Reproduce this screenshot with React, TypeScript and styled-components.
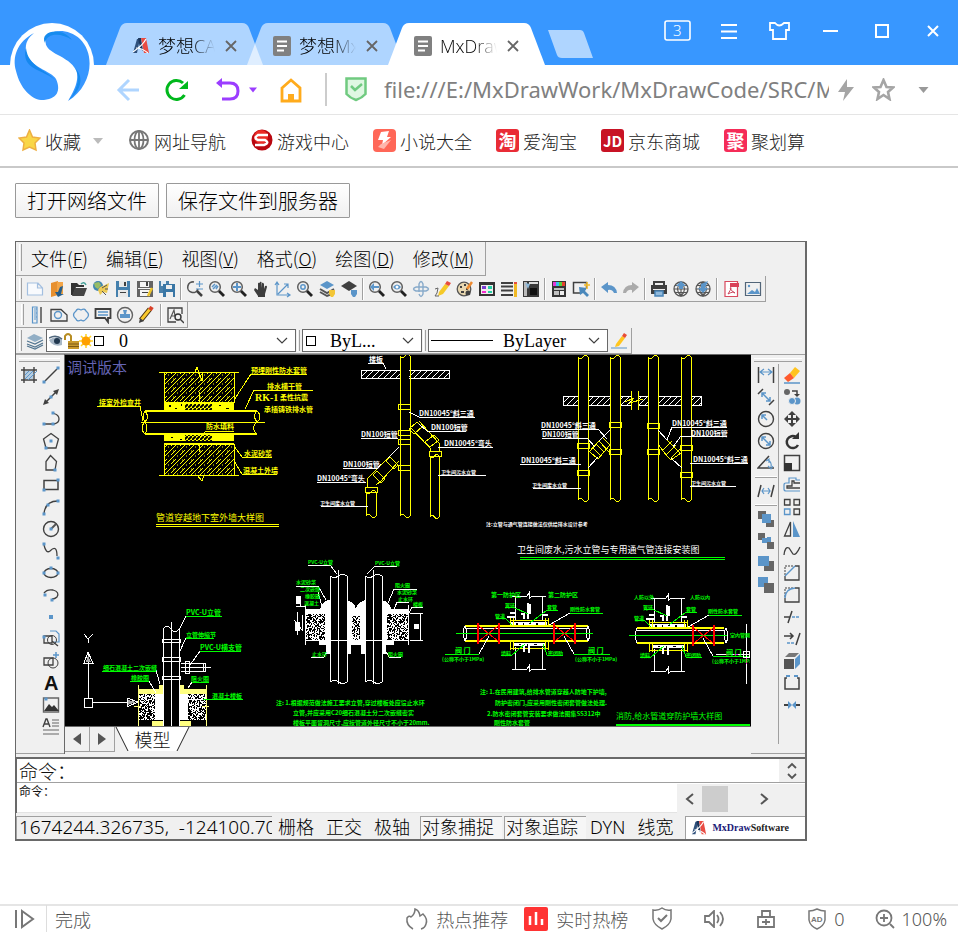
import React from "react";
import styled, { createGlobalStyle, css } from "styled-components";

const SANS = '"Noto Sans CJK SC", "Noto Sans", sans-serif';
const UI = '"Open Sans", "Noto Sans CJK SC", sans-serif';
const LATIN_FIRST = '"Noto Sans", "Noto Sans CJK SC", sans-serif';
const B = "#5b95c9";
const K = "#404040";
const GREY = "#777";

const GlobalStyle = createGlobalStyle`
  * { box-sizing: border-box; }
  html, body, #root { height: 100%; }
  body { margin: 0; background: #fff; font-family: ${SANS}; font-weight: 300; color: #111; overflow: hidden; }
  button { font: inherit; color: inherit; cursor: pointer; }
  svg { display: block; flex: none; }
`;

/* ---------- browser frame ---------- */

const Page = styled.div`
  display: flex;
  flex-direction: column;
  min-height: 100vh;
`;
const TitleBar = styled.header`
  position: relative;
  display: flex;
  align-items: flex-end;
  height: 65px;
  padding-left: 106px;
  background: #3897ff;
`;
const BrandBadge = styled.div`
  position: absolute;
  left: 10px;
  top: 23px;
  z-index: 3;
`;
const TabShape = styled.div<{ $active?: boolean }>`
  display: flex;
  align-items: center;
  width: 157px;
  height: 42px;
  margin-right: -16px;
  padding: 3px 0 0 26px;
  background: ${(p) => (p.$active ? "#fff" : "rgba(255,255,255,.6)")};
  clip-path: path("M0 42 L14 5 Q16 0 21 0 H136 Q141 0 143 5 L157 42 Z");
`;
const TabTitle = styled.span`
  width: 57px;
  margin: 0 10px 0 8px;
  overflow: hidden;
  white-space: nowrap;
  font: 300 18px/26px ${UI};
  color: #000;
  mask-image: linear-gradient(90deg, #000 60%, transparent 100%);
`;
const BareButton = styled.button`
  display: flex;
  align-items: center;
  justify-content: center;
  padding: 0;
  border: 0;
  background: none;
`;
const NewTab = styled.button`
  width: 45px;
  height: 28px;
  margin: 0 0 7px 19px;
  padding: 0;
  border: 0;
  background: #afd5ff;
  clip-path: path("M0 0 H32 Q35 0 36 3 L45 28 H14 Q10 28 9 25 Z");
`;
const WindowButtons = styled.div`
  display: flex;
  align-self: flex-start;
  gap: 24px;
  margin: 17px 12px 0 auto;
  button { width: 27px; height: 28px; }
`;
const AddressRow = styled.div`
  display: flex;
  align-items: center;
  height: 50px;
  padding: 0 28px 0 115px;
  border-bottom: 1px solid #e5e5e5;
`;
const NavGroup = styled.nav`
  display: flex;
  align-items: center;
  gap: 22px;
`;
const NavSplit = styled.div`
  display: flex;
  align-items: center;
  gap: 8px;
`;
const Rule = styled.div`
  width: 2px;
  height: 33px;
  margin: 0 18px 0 22px;
  background: #ccc;
`;
const Url = styled.input`
  flex: 1;
  min-width: 0;
  height: 36px;
  margin: 0 0 0 17px;
  padding: 0 0 2px;
  border: 0;
  outline: 0;
  color: #808080;
  background: none;
  font: 22px "Noto Sans", sans-serif;
`;
const AddressActions = styled.div`
  display: flex;
  align-items: center;
  gap: 17px;
  margin-left: 8px;
  > svg:last-child { margin-left: 5px; }
`;
const Bookmarks = styled.nav`
  display: flex;
  align-items: center;
  gap: 24px;
  height: 53px;
  padding: 0 18px;
  border-bottom: 2px solid #c9c9c9;
`;
const Bookmark = styled.a`
  display: flex;
  align-items: center;
  gap: 4px;
  color: #222;
  text-decoration: none;
  white-space: nowrap;
  font-size: 18px;
  line-height: 26px;
`;
const BookmarkCaret = styled.span`
  margin-left: 8px;
`;
const Badge = styled.span<{ $bg: string; $size: number }>`
  display: grid;
  place-items: center;
  width: 23px;
  height: 23px;
  border-radius: 3px;
  background: ${(p) => p.$bg};
  color: #fff;
  font: bold ${(p) => p.$size}px/23px ${SANS};
`;
const Content = styled.main`
  flex: 1;
  padding: 15px;
`;
const ActionRow = styled.div`
  display: flex;
  gap: 7px;
`;
const PushButton = styled.button`
  height: 35px;
  padding: 0 11px;
  border: 1px solid #999;
  border-radius: 1px;
  background: linear-gradient(#fff, #f0f0f0);
  font-size: 20px;
  line-height: 30px;
  color: #000;
`;
const Footer = styled.footer`
  display: flex;
  align-items: center;
  height: 29px;
  padding: 0 11px 2px 15px;
  border-top: 2px solid #e5e5e5;
  color: #555;
  font-size: 18px;
  line-height: 24px;
`;
const FooterState = styled.div`
  display: flex;
  align-items: center;
  height: 27px;
  margin-left: 11px;
  padding-left: 8px;
  border-left: 1px solid #ddd;
`;
const FooterTools = styled.div`
  display: flex;
  align-items: center;
  gap: 30px;
  margin-left: auto;
`;
const FooterTool = styled(BareButton)<{ $gap?: number }>`
  gap: ${(p) => p.$gap ?? 7}px;
`;
const FooterFigure = styled.span`
  font-family: ${LATIN_FIRST};
`;
const FooterNews = styled.div`
  display: flex;
  gap: 16px;
  margin-right: -7px;
`;

/* ---------- CAD control ---------- */

const Cad = styled.section`
  max-width: 792px;
  margin-top: 23px;
  border: 1px solid #696969;
  border-right-width: 2px;
  border-bottom-width: 2px;
  background: #f0f0f0;
`;
const Grip = styled.span`
  flex: none;
  width: 3px;
  align-self: stretch;
  margin: 2px 2px 2px 1px;
  border-left: 1px solid #fff;
  border-right: 1px solid #a0a0a0;
`;
const bar = css`
  display: flex;
  align-items: center;
  width: max-content;
  max-width: 100%;
  border: solid #a0a0a0;
  border-width: 0 1px 1px 0;
`;
const MenuBar = styled.nav`
  ${bar}
  height: 34px;
  padding: 0 0 2px 2px;
`;
const MenuItem = styled.button`
  padding: 0 11px 0 7px;
  border: 0;
  background: none;
  font: 300 18px/28px ${SANS};
  color: #000;
`;
const ToolBar = styled.div<{ $inset?: number }>`
  ${bar}
  height: 26px;
  padding-left: ${(p) => p.$inset ?? 2}px;
  padding-right: 1px;
`;
const Tool = styled.button`
  display: grid;
  place-items: center;
  flex: none;
  width: 22px;
  height: 22px;
  padding: 0;
  border: 0;
  background: none;
`;
const Divider = styled.span<{ $flat?: boolean }>`
  flex: none;
  ${(p) =>
    p.$flat
      ? "width: 22px; height: 2px; margin: 2px 0; border-bottom: 1px solid #a0a0a0; border-top: 1px solid #fff;"
      : "width: 2px; height: 22px; margin: 0 2px; border-left: 1px solid #a0a0a0; border-right: 1px solid #fff;"}
`;
const Combo = styled.label<{ $w: number }>`
  position: relative;
  display: flex;
  align-items: center;
  width: ${(p) => p.$w}px;
  height: 23px;
  padding-left: 2px;
  border: 1px solid #696969;
  background: #fff;
  > svg:last-child { position: absolute; right: 7px; pointer-events: none; }
`;
const ComboSelect = styled.select<{ $indent: number }>`
  appearance: none;
  flex: 1;
  min-width: 0;
  height: 21px;
  padding: 0 0 0 ${(p) => p.$indent}px;
  border: 0;
  outline: 0;
  background: none;
  color: #000;
  font: 18px/20px "Liberation Serif", serif;
`;
const Workspace = styled.div`
  display: grid;
  grid-template-columns: 48px minmax(0, 1fr) 54px;
  height: 400px;
`;
const SideDock = styled.div`
  display: grid;
  grid-template-columns: 22px 22px;
  align-content: start;
  padding: 3px 1px 0 2px;
  border-top: 1px solid #a0a0a0;
  border-bottom: 1px solid #a0a0a0;
`;
const SideDockRight = styled(SideDock)`
  grid-template-columns: 25px 26px;
`;
const FlatGrip = styled.span`
  grid-column: 1 / -1;
  height: 4px;
  margin: 0 2px 2px 1px;
  border-top: 1px solid #fff;
  border-bottom: 1px solid #a0a0a0;
`;
const SideColumn = styled.div<{ $rule?: boolean }>`
  display: flex;
  flex-direction: column;
  align-items: center;
  min-height: 380px;
  border-left: ${(p) => (p.$rule ? "1px solid #a0a0a0" : "0")};
`;
const Viewport = styled.div`
  display: flex;
  flex-direction: column;
  min-width: 0;
  border-top: 1px solid #696969;
  border-left: 1px solid #696969;
`;
const Screen = styled.div`
  height: 372px;
  overflow: hidden;
  background: #000;
  border-bottom: 1px solid #696969;
`;
const ModelStrip = styled.div`
  display: flex;
  height: 25px;
`;
const Pager = styled(BareButton)`
  width: 25px;
  height: 25px;
  border: solid #a0a0a0;
  border-width: 0 1px 1px 0;
`;
const ModelTab = styled.button`
  position: relative;
  width: 75px;
  height: 25px;
  padding: 0;
  border: 0;
  background: none;
  font-size: 18px;
  line-height: 25px;
  svg { position: absolute; left: 0; top: 0; }
  span { position: relative; }
`;
const CommandPane = styled.div`
  margin-top: 3px;
  border-top: 2px solid #696969;
  border-left: 1px solid #696969;
  background: #fff;
`;
const CommandLine = styled.label`
  display: flex;
  align-items: center;
  height: 24px;
  padding-left: 2px;
  border-bottom: 1px solid #a0a0a0;
  font-size: 19px;
  line-height: 22px;
`;
const CommandInput = styled.input`
  flex: 1;
  min-width: 0;
  height: 20px;
  border: 0;
  outline: 0;
  background: none;
`;
const Spin = styled.div`
  display: grid;
  place-items: center;
  width: 26px;
  height: 23px;
  background: #f0f0f0;
`;
const HistoryRow = styled.div`
  display: flex;
  justify-content: space-between;
  height: 30px;
  padding-left: 2px;
  font-size: 12px;
  font-weight: 400;
  line-height: 16px;
  border-bottom: 1px solid #e3e3e3;
`;
const Scroller = styled.div`
  display: flex;
  align-items: center;
  width: 128px;
  height: 29px;
  margin-top: 1px;
  padding-right: 28px;
  background: #f0f0f0;
`;
const Thumb = styled.span`
  flex: 0 0 26px;
  height: 26px;
  background: #cdcdcd;
`;
const ScrollArrow = styled(BareButton)<{ $push?: boolean }>`
  width: 25px;
  height: 26px;
  margin-left: ${(p) => (p.$push ? "auto" : "0")};
`;
const StatusRow = styled.div`
  display: flex;
  align-items: center;
  height: 26px;
  padding-top: 2px;
  font-family: ${LATIN_FIRST};
  font-size: 18px;
  line-height: 23px;
  color: #000;
`;
const Coordinates = styled.output`
  width: 256px;
  height: 23px;
  margin-right: 2px;
  overflow: hidden;
  padding-left: 2px;
  border: solid #a0a0a0;
  border-width: 1px 0 0 1px;
  white-space: pre;
  font-size: 19px;
  line-height: 21px;
`;
const StatusToggle = styled.button<{ $on?: boolean }>`
  height: 23px;
  margin-left: ${(p) => (p.$on ? 2 : 4)}px;
  padding: 0 8px 0 ${(p) => (p.$on ? 1 : 0)}px;
  border: solid ${(p) => (p.$on ? "#a0a0a0" : "transparent")};
  border-width: 1px 0 0 ${(p) => (p.$on ? 1 : 0)}px;
  background: ${(p) => (p.$on ? "#f6f6f6" : "none")};
  line-height: 21px;
  white-space: nowrap;
`;
const Vendor = styled.div`
  display: flex;
  align-items: center;
  gap: 5px;
  flex: 1;
  height: 23px;
  margin-left: 4px;
  padding-left: 5px;
  border: solid #a0a0a0;
  border-width: 1px 0 0 1px;
  background: #fff;
  font: bold 10px "Liberation Serif", serif;
  color: #222;
  b { color: #1a1a78; }
`;

/* ---------- icons ---------- */

const Svg = ({ s = 18, w, h, vb, children }: { s?: number; w?: number; h?: number; vb?: string; children: React.ReactNode }) => (
  <svg width={w ?? s} height={h ?? s} viewBox={vb ?? `0 0 ${w ?? s} ${h ?? s}`} fill="none" aria-hidden="true">
    {children}
  </svg>
);
const L = ({ d, c = K, w = 1.5, f = "none" }: { d: string; c?: string; w?: number; f?: string }) => (
  <path d={d} stroke={c} strokeWidth={w} fill={f} />
);
const F = ({ d, c = K }: { d: string; c?: string }) => <path d={d} fill={c} />;
const Dots = ({ at }: { at: number[][] }) => (
  <>
    {at.map(([x, y], i) => (
      <rect key={i} x={x - 1.5} y={y - 1.5} width="3" height="3" fill={B} />
    ))}
  </>
);
const Lens = ({ children }: { children?: React.ReactNode }) => (
  <>
    <circle cx="7" cy="7" r="5.3" stroke="#606060" strokeWidth="1.5" />
    <path d="M11 11 L16 16" stroke="#222" strokeWidth="2.8" />
    {children}
  </>
);
const Floppy = () => (
  <>
    <F d="M2 1H16V17H2Z" c="#4580ad" />
    <F d="M5 1H13V7H5Z M4 10H14V17H4Z" c="#e8e8e8" />
    <F d="M10 2H12V6H10Z M6 12H12V13H6Z" />
  </>
);
const Globe = () => (
  <>
    <circle cx="9" cy="9" r="7" stroke="#555" strokeWidth="1.3" />
    <L d="M2 9H16M9 2V16M3 5.5H15M3 12.5H15M9 2Q2 9 9 16M9 2Q16 9 9 16" c="#555" w={1.1} />
  </>
);
const Caret = ({ c = "#999", w = 10 }) => (
  <Svg w={w} h={6} vb="0 0 10 6"><F d="M0 0H10L5 6Z" c={c} /></Svg>
);
const Chevron = () => <Svg w={12} h={8}><L d="M1 1L6 6L11 1" w={1.2} /></Svg>;
const Swatch = () => <Svg w={12} h={12}><rect x="1.5" y="1.5" width="9" height="9" stroke="#000" /></Svg>;
const Layers = () => (
  <><L d="M1 9L9 12L17 8M1 12L9 15L17 11M1 14L9 17L17 13" c="#527590" w={1.2} /><F d="M1 6L8 2L17 6L9 10Z" c="#91aec5" /></>
);

const icons: Record<string, React.ReactNode> = {
  new: <L d="M1.5 3H12L16.5 8V15H1.5ZM11.5 3V8H16" c="#a3bfe0" w={1.2} f="#f8fafd" />,
  open: <><F d="M3 3L10 1V15L3 17Z" c="#e7902f" /><F d="M9 2H15V14H9Z" c="#f3a547" /><F d="M15 6L13 14L16 14L10 17L7 12L10 12L12 7Z" c="#245d8b" /></>,
  folder: <><F d="M1 3H7L9 5H14V7H6L3 15H1Z" c="#333" /><F d="M5 8H17L14 16H2Z" c="#454545" /><L d="M11 4Q14 1 16 5" c="#48a29a" /></>,
  web: <><circle cx="6" cy="6" r="5" fill="#4387b0" /><F d="M2 3L7 2L9 5L6 9L3 7Z" c="#98bd66" /><F d="M8 7L13 5L17 3L15 13L11 12L8 15L6 10Z" c="#ecca55" /><L d="M10 8L15 5M10 11L14 15M13 9L16 9" c="#555" w={1} /></>,
  save: <Floppy />,
  saveas: <><F d="M1 1H17V17H1Z" c="#646464" /><F d="M4 2H13V7H4ZM4 10H14V16H4ZM2 8H16V9H2Z" c="#f5f5f5" /><F d="M6 12H12V13H6ZM10 2H12V6H10Z" /><L d="M16 8L12 16" c="#edc52d" w={2.5} /></>,
  saveall: <><F d="M1 1H11V13H1Z" c="#4b80a9" /><F d="M3 1H8V6H3Z" c="#e5edf3" /><F d="M5 4H17V17H5Z" c="#3976a5" /><F d="M8 5H14V9H8ZM8 12H15V17H8Z" c="#eee" /></>,
  zoomrt: <><path d="M8 2A5.3 5.3 0 1 0 12 9" stroke="#555" strokeWidth="1.6" /><L d="M11 11L16 16" w={2.5} /><L d="M10 4H17M13.5 1V7M10 9H17" c={B} w={1.2} /></>,
  zoomwin: <Lens><L d="M4 7L7 4M5 9L9 5M8 9L10 6" c={B} /></Lens>,
  zoomall: <Lens><L d="M7 3V11M3 7H11" c={B} w={2} /></Lens>,
  pan: <path d="M6 16L2 10L3 8L6 10V4Q6 2 7.5 3V8V3Q8 1 9.5 2V8L10 3Q11 2 12 4V9L13 6Q15 5 15 7L13 14V17H6Z" fill="#3d3d3d" />,
  axis: <L d="M3 2V15H16M1 5L3 2L5 5M13 13L16 15L13 17M4 14L14 4M10 4H14V8" c={B} w={1.2} />,
  zoomobj: <Lens><circle cx="7" cy="7" r="2.2" stroke={B} strokeWidth="1.5" /></Lens>,
  layon: <><F d="M2 5L9 1L16 5L9 9Z" c={B} /><L d="M2 9L9 13L16 9M2 12L9 16L14 14" c="#555" w={2} /><F d="M11 10H17V14L15 17H13L11 14Z" c="#f3c637" /></>,
  layoff: <><F d="M1 6L9 1L17 6L9 11Z" /><F d="M11 10H17V14L15 17H13L11 14Z" c={B} /></>,
  prev: <Lens><F d="M2 7L6 3V6H11V8H6V11Z" c={B} /></Lens>,
  dyn: <Lens><F d="M3 7Q7 2 11 7Q7 12 3 7" c={B} /><circle cx="7" cy="7" r="1.5" fill="#fff" /></Lens>,
  orbit: <L d="M7 12V4Q9 -1 11 4V14Q9 19 7 14M4 7H14Q19 9 14 11H4Q-1 9 4 7" c="#88aaca" w={1.4} />,
  pencil: <><F d="M5 12L11 4L15 6L9 14L4 16Z" c="#f5c928" /><F d="M11 4L13 1L17 3L15 6Z" c="#e84c3d" /><L d="M1 9L4 8L3 13L1 16H5" c="#666" w={1} /></>,
  palette: <><circle cx="8" cy="9" r="6.8" stroke="#555" strokeWidth="1.3" fill="#e8d7b0" /><F d="M4 6H6V8H4ZM8 4H10V6H8ZM5 11H8V13H5ZM10 8H12V10H10Z" /><L d="M16 2L11 9" c="#ee8a30" w={2.5} /><circle cx="12" cy="13" r="2.5" fill={K} /></>,
  props: <><F d="M1 2H17V16H1Z" c="#333" /><F d="M3 5H15V14H3Z" c="#eee" /><F d="M4 6H8V9H4Z" c="#7a3cd2" /><F d="M4 11H8V13H4Z" c="#f32cce" /><F d="M10 6H14V9H10ZM10 11H14V13H10Z" c="#25d1a6" /></>,
  lines: <><L d="M1 3H13M1 6.5H13M1 10.5H13M1 15H13" w={2.2} /><F d="M14 4H17V17H14Z" c="#f1ba26" /><F d="M14 2H17V4H14Z" c="#e84c3d" /></>,
  block: <><F d="M1 1H17V17H1Z" c="#3a3a3a" /><F d="M2 2H5V16H2Z" c="#bbb" /><F d="M8 8H15V15H8Z" c="#111" /><F d="M3 3L8 4L6 9Z" c="#8eb8d8" /><F d="M7 2H16V4H7Z" c="#ddd" /></>,
  calc: <><F d="M2 1H16V17H2Z" c="#353535" /><F d="M3 2H6V6H3Z" c="#e538d7" /><F d="M6 2H9V6H6Z" c="#36c3e8" /><F d="M9 2H12V6H9Z" c="#58cf38" /><F d="M12 2H15V6H12Z" c="#e3402d" /><L d="M4 9H14M4 12H9M4 14H9" c="#eee" /><F d="M10 11H14V15H10Z" c="#eee" /></>,
  select: <><L d="M14.5 8V2.5H1.5V13H9" /><F d="M7 7L15 8L13 11L17 15L15 17L11 13L8 15Z" c="#4b89bc" /><L d="M15 2V9M12 5H18" c="#f3bb28" /></>,
  undo: <F d="M1 7L8 2V5Q16 5 17 13L14 13Q12 9 8 10V13Z" c={B} />,
  redo: <F d="M17 7L10 2V5Q2 5 1 13L4 13Q6 9 10 10V13Z" c="#aaa" />,
  print: <><L d="M4 5V2H14V5" w={2} /><F d="M1 5H17V14H1Z" c="#3f3f3f" /><F d="M3 9H15V10H3Z" c="#eee" /><path d="M5 11H13V16H5Z" fill="#91b9db" stroke="#4884b8" strokeWidth="1.5" /></>,
  globeup: <><Globe /><F d="M9 1L14 6H11V9H7V6H4Z" c={B} /></>,
  globedown: <><Globe /><F d="M9 13L4 8H7V4L14 1L11 8H14Z" c={B} /></>,
  pdf: <><path d="M3 1.5H15.5V16.5H3Z" stroke="#d84a5e" strokeWidth="1.2" fill="#fff" /><F d="M8 3H17V7H8Z" c="#d94259" /><L d="M6 14Q11 6 8 8Q9 11 13 13Q11 11 6 14" c="#cb455c" w={1} /></>,
  image: <><L d="M1.5 2.5H16.5V15.5H1.5Z" w={1.2} c="#526578" /><F d="M3 14L8 10L11 12L13 8L16 14Z" c={B} /><circle cx="5" cy="6" r="1.2" fill={B} /></>,
  ruler: <><L d="M4.5 1V17H9V1ZM6 3H9M6 5H8M6 7H9M6 9H8M6 11H9M6 13H8" c={B} w={1.2} /><L d="M13 1V17" w={2} c="#777" /></>,
  area: <><L d="M1 3.5H11L17 9V15H1Z" w={1.3} /><circle cx="8" cy="9" r="3.500" stroke={B} strokeWidth="1.4" /></>,
  cloud: <L d="M4 5Q5 2 9 4Q13 2 14 5Q19 9 14 13Q12 16 9 14Q5 16 4 13Q-1 9 4 5Z" c={B} w={1.3} />,
  note: <><L d="M1.5 3H16.5V12H14V16L11 12H1.5Z" w={1.8} /><L d="M4 6H14M4 9H14" c={B} /></>,
  stamp: <><circle cx="9" cy="9" r="7.5" stroke="#626262" strokeWidth="1.4" /><F d="M7 4H11L10 8H14V12H4V8H8Z" c={B} /></>,
  pen: <><L d="M3 14L12 3" c="#463010" w={5} /><L d="M3 14L12 3" c="#f9c92e" w={3} /><L d="M12 4L14 1" c="#d9412a" w={4} /><F d="M1 17L2 12L6 15Z" /></>,
  find: <><L d="M16 8V2H2V16H10" w={1.3} /><L d="M4 13L8 4L9 10M5 10H9" c="#555" w={1.2} /><circle cx="12" cy="11" r="3" stroke="#333" strokeWidth="1.4" /><L d="M14 13L18 17" /></>,
  layers: <Layers />,
  hatch: <><L d="M4 1V17M14 1V17M1 4H17M1 14H17" w={1.4} /><F d="M5 5H13V13H5Z" c="#b5cce0" /><L d="M5 9L9 5M5 13L13 5M8 14L17 5" c={B} w={1} /></>,
  line: <><L d="M3 15L15 3" /><Dots at={[[2, 16], [16, 2]]} /></>,
  xline: <><L d="M3 15L15 3" /><F d="M1 17L3 11L7 15ZM17 1L11 3L15 7Z" /><Dots at={[[9, 9]]} /></>,
  pline: <><L d="M3 14H12Q17 13 17 9Q17 5 12 3.5" w={1.3} /><Dots at={[[2, 14], [11, 14], [11, 3]]} /></>,
  polygon: <><L d="M9 1.5L16.5 7L14 16H4L1.5 7Z" w={1.3} /><Dots at={[[9, 9], [4, 16]]} /></>,
  polyshape: <><L d="M8.500 1.500L14.500 7.500L13 16H4V7.500Z" w={1.3} /><Dots at={[[13, 16]]} /></>,
  rect: <><L d="M2 4.5H16V13.5H2Z" /><Dots at={[[16, 4], [2, 14]]} /></>,
  arc: <><L d="M2 16Q3 3 16 3" w={1.3} /><Dots at={[[2, 16], [6, 7], [16, 3]]} /></>,
  circle: <><circle cx="9" cy="9" r="7.5" stroke={K} strokeWidth="1.4" /><L d="M9 9L14 4" c="#555" w={2} /><Dots at={[[9, 9]]} /></>,
  spline: <><L d="M2 3Q4 12 8 9Q15 2 15 14" w={1.3} /><Dots at={[[2, 2], [16, 16]]} /></>,
  ellipse: <><ellipse cx="9" cy="9" rx="7" ry="4.500" stroke={K} strokeWidth="1.4" /><Dots at={[[2, 9], [16, 9], [9, 4]]} /></>,
  elarc: <><L d="M2 7Q5 3 11 4Q18 6 15 11Q13 13 10 13" w={1.3} /><Dots at={[[3, 9], [10, 14]]} /></>,
  point: <Svg><rect x="7" y="7" width="4" height="4" fill={B} /></Svg>,
  insert: <><L d="M8 1H14L17 4V12H12" c={B} w={1.2} /><circle cx="10" cy="10" r="4.500" stroke={K} /><L d="M2 6H10V13H2ZM10 11L16 16" w={1.3} /><Dots at={[[2, 7]]} /></>,
  make: <><circle cx="11" cy="11" r="5" stroke={K} /><L d="M2 6H11V13H2Z" w={1.3} /><L d="M14 0V6M11 3H17" c={B} /></>,
  picture: <><L d="M1.5 2H16.5V16H1.5Z" c="#666" w={1.4} /><F d="M2 15L7 8L10 11L12 9L17 15Z" c="#333" /><Dots at={[[4, 3]]} /></>,
  mtext: <><L d="M10 2H17M10 5H17M10 8H17M1 12H17M1 16H17" c="#666" w={1.2} /><L d="M1 9L4 1H5L8 9M2 6H7" w={1.4} /></>,
  dimlin: <><L d="M1.5 1V17M16.5 1V17" /><L d="M4 6H14M7 3L3 6L7 9M11 3L15 6L11 9" c={B} w={1.2} /></>,
  dimali: <><L d="M1 6L6 1M12 17L17 12" /><L d="M5 5L13 13M5 9V5H9M9 13H13V9" c={B} /></>,
  dimrad: <><circle cx="9" cy="9" r="7.5" stroke={K} strokeWidth="1.4" /><L d="M5 5L10 10M5 9V5H9" c={B} /></>,
  dimdia: <><circle cx="9" cy="9" r="7.5" stroke={K} strokeWidth="1.4" /><L d="M5 5L13 13M5 9V5H9M9 13H13V9" c={B} /></>,
  dimang: <><L d="M12 2L1 14H17" /><L d="M11 6Q15 8 14 13M9 7L12 5L12 9M11 12L14 15L16 12" c={B} w={1.1} /></>,
  dimcon: <><L d="M4 3L1 15M17 3L14 15" /><L d="M5 9H13M7 6L5 9L7 12M11 6L13 9L11 12" c={B} w={1.2} /></>,
  order1: <><F d="M1 1H9V9H1ZM9 10H17V17H9Z" c="#666" /><F d="M5 4H14V13H5Z" c={B} /></>,
  order2: <><F d="M1 1H8V8H1ZM10 10H17V17H10Z" c="#666" /><F d="M5 6H10V11H5ZM10 5H14V10H10Z" c={B} /></>,
  order3: <><F d="M9 7H17V17H7V12H9Z" c="#666" /><F d="M1 2H12V12H1Z" c={B} /></>,
  order4: <><F d="M1 1H11V11H1Z" c={B} /><F d="M7 7H17V17H7Z" c="#666" /></>,
  erase: <><F d="M7 7L12 1L17 5L11 12Z" c="#ffc31f" /><F d="M7 7L11 12L5 16L1 12Z" c="#ff5a2d" /><L d="M1 17H17" c={B} /></>,
  copy: <><circle cx="4" cy="4" r="3" fill="#666" /><L d="M9 3H14V7" /><F d="M11 6H17L14 9Z" /><circle cx="14" cy="13" r="3.500" fill={B} /><circle cx="9" cy="13" r="3.500" fill={B} stroke="#f0f0f0" /></>,
  move: <F d="M9 1L13 5H10V8H13V5L17 9L13 13V10H10V13H13L9 17L5 13H8V10H5V13L1 9L5 5V8H8V5H5Z" />,
  rotate: <><path d="M13 5A6 6 0 1 0 15 13" stroke="#333" strokeWidth="2.5" /><F d="M9 7H16V0Z" c="#333" /></>,
  scale: <><L d="M1.5 1.5H16.5V16.5H1.5Z" /><F d="M1 9H9V17H1Z" c="#333" /></>,
  offset: <><L d="M17 4H13V2H6V7H3Q1 7 1 9V13Q1 15 3 15H17" c={B} w={1.2} /><L d="M17 7H11V5H9V10H4V12H17" w={1.3} /></>,
  array: <><L d="M1.5 1.5H7V7H1.5ZM11 1.5H16.5V7H11ZM11 11H16.5V16.5H11Z" w={1.3} /><L d="M1.5 11H7V16.5H1.5Z" c={B} w={1.3} /></>,
  mirror: <><L d="M7.5 2V16H1.5Z" w={1.3} /><F d="M10 1L17 17H10Z" c={B} /></>,
  sketch: <L d="M1 13Q2 4 6 6L10 12Q13 14 17 5" w={1.3} />,
  chamfer: <><L d="M12 2H16V16H2V12" w={1.3} /><path d="M2 11V2H11" stroke={K} strokeDasharray="2 1" /><L d="M2 12L12 2" c={B} /></>,
  fillet: <><L d="M12 2H16V16H2V12" w={1.3} /><path d="M2 11V2H11" stroke={K} strokeDasharray="2 1" /><L d="M2 12Q2 3 12 2" c={B} /></>,
  trim: <><L d="M1 9H7M5 15L9 3" /><path d="M9 9H17" stroke={B} strokeWidth="1.5" strokeDasharray="3 1" /></>,
  extend: <><L d="M1 6H9M7 3L10 6L7 9M17 3L13 15" /><path d="M4 13H12" stroke={B} strokeWidth="1.5" strokeDasharray="3 1" /></>,
  box: <><F d="M1 7H11V17H1Z" c="#555" /><F d="M2 5L6 1H16L12 5Z" c="#777" /><F d="M12 7L17 2V12L12 17Z" c={B} /></>,
  gap: <><L d="M4 4H2V15H16V4H14" /><L d="M3 2H7M11 2H15" c={B} w={2} /></>,
  join: <><L d="M1 9H5M13 9H17" w={2} /><F d="M5 5L9 9L5 13ZM13 5L9 9L13 13Z" c={B} /></>,
};

const ToolButton = ({ name }: { name: string }) =>
  name === "|" || name === "-" ? (
    <Divider $flat={name === "-"} />
  ) : (
    <Tool aria-label={name}>
      {name === "text" ? (
        <Svg><text x="2" y="16" fontFamily="Liberation Sans" fontWeight="bold" fontSize="20" fill="#111">A</text></Svg>
      ) : (
        <Svg>{icons[name]}</Svg>
      )}
    </Tool>
  );
const Tools = ({ list }: { list: string }) => (
  <>{list.split(" ").map((n, i) => <ToolButton key={i} name={n} />)}</>
);

const MLogo = ({ s = 18 }) => (
  <Svg s={s} vb="0 0 18 18">
    <F d="M1 16L5 2H8L5 16Z" c="#30517c" /><F d="M6 1H9L11 14L8 11Z" c="#1b365c" /><F d="M9 1H14L17 16H12Z" c="#e94c43" /><L d="M1 15Q11 8 14 2M4 11Q10 11 16 16" c="#fff" w={1.2} />
  </Svg>
);
const DocIcon = () => (
  <Svg w={18} h={20}><rect width="18" height="20" rx="2" fill="#808080" /><L d="M4 5.5H14M4 10H14M4 14.5H11" c="#fff" w={2} /></Svg>
);
const CloseIcon = ({ c = "#666", w = 1.8 }) => <Svg s={12}><L d="M1 1L11 11M11 1L1 11" c={c} w={w} /></Svg>;
const Brand = () => (
  <Svg s={84} vb="10 23 84 84">
    <circle cx="52" cy="65" r="42" fill="#fff" />
    <path d="M34 33C17 42 12 57 16 71C20 88 31 99 41 100C58 100 61 90 56 79C52 71 28 67 26 51C25 43 28 38 34 33Z" fill="#3897ff" />
    <path d="M26 48C20 70 45 70 55 80C47 70 28 67 26 48Z" fill="#1688ee" />
    <path d="M68 101C92 86 96 55 80 39C68 28 49 29 46 39C42 54 68 54 76 70C80 79 74 91 68 101Z" fill="#3897ff" />
    <path d="M45 43C47 32 62 33 72 40C62 26 39 31 45 43ZM69 100C79 88 80 75 75 68C84 77 82 89 69 100Z" fill="#168bee" />
  </Svg>
);

/* ---------- model-space drawing ---------- */

const Y = "#ff0";
const G = "#0f0";
const W = "#fff";
const speckle = (n: number, w: number, h: number) => {
  let s = 7;
  const next = () => (s = (s * 1103515245 + 12345) % 2147483648) / 2147483648;
  return Array.from({ length: n }, () => `M${Math.floor(next() * w)} ${Math.floor(next() * h)}h1v1h-1z`).join("");
};
const S = ({ d, c = W, w = 1 }: { d: string; c?: string; w?: number }) => <path d={d} stroke={c} strokeWidth={w} fill="none" />;
const T = ({ x, y, s = 7, c = W, children }: { x: number; y: number; s?: number; c?: string; children: string }) => (
  <text x={x} y={y} fontSize={s} fontWeight={s < 8 ? 700 : 400} fill={c}>{children}</text>
);
const labels: [number, number, number, string, string][] = [
  [99, 405, 7, Y, "接室外检查井"], [251, 373, 7, Y, "预埋刚性防水套管"], [267, 389, 7, Y, "排水横干管"],
  [264, 412, 7, Y, "承插铸铁排水管"], [206, 429, 7, Y, "防水填料"],
  [244, 456, 7, Y, "水泥砂浆"], [243, 473, 7, Y, "混凝土外墙"], [156, 521, 9, Y, "管道穿越地下室外墙大样图"],
  [369, 362, 7, W, "楼板"], [419, 416, 7, W, "DN10045°斜三通"], [431, 430, 7, W, "DN100短管"],
  [444, 446, 7, W, "DN10045°弯头"], [441, 474, 5, W, "卫生间污水立管"], [361, 437, 7, W, "DN100短管"],
  [343, 467, 7, W, "DN100短管"], [317, 481, 7, W, "DN10045°弯头"], [320, 505, 5, W, "卫生间废水立管"],
  [486, 526, 5, W, "注:立管与通气管连接做法仅供给排水设计参考"],
  [541, 428, 7, W, "DN10045°斜三通"], [542, 437, 7, W, "DN100短管"], [521, 463, 7, W, "DN10045°斜三通"], [532, 487, 5, W, "卫生间废水立管"],
  [672, 426, 7, W, "DN10045°斜三通"], [691, 436, 7, W, "DN100短管"], [693, 462, 7, W, "DN10045°斜三通"], [691, 485, 5, W, "卫生间污水立管"],
  [517, 553, 9, W, "卫生间废水,污水立管与专用通气管连接安装图"],
  [186, 615, 7, G, "PVC-U立管"], [186, 637, 6, G, "立管伸缩节"], [200, 650, 7, G, "PVC-U横支管"],
  [103, 670, 6, G, "细石混凝土二次嵌缝"], [131, 680, 6, G, "橡胶圈"], [191, 681, 6, G, "阻火圈"], [212, 698, 6, G, "混凝土楼板"],
  [308, 564, 5, G, "PVC-U立管"], [375, 565, 5, G, "PVC-U立管"], [296, 584, 5, G, "水泥砂浆"], [300, 591, 5, G, "二次嵌缝"],
  [305, 598, 5, G, "橡胶圈"], [304, 605, 5, G, "混凝土"], [395, 587, 5, G, "阻火圈"], [397, 594, 5, G, "水泥砂浆"],
  [398, 601, 5, G, "止水环"], [413, 606, 5, G, "楼板"], [312, 656, 5, G, "止水环"], [388, 656, 5, G, "阻火圈"],
  [276, 705, 6, G, "注: 1.根据规范做法施工要求立管,穿过楼板处应设止水环"],
  [293, 715, 6, G, "立管,并应采用C20细石混凝土分二次嵌缝密实"],
  [293, 725, 6, G, "楼板平面留洞尺寸,应按管道外径尺寸不小于20mm."],
  [491, 597, 6, G, "第一防护区"], [548, 597, 6, G, "第二防护区"], [505, 607, 5, G, "翼环"], [547, 609, 5, G, "套管"],
  [570, 611, 5, G, "刚性防水套管"], [495, 618, 5, G, "管道"], [501, 655, 5, G, "填料"], [548, 655, 5, G, "密闭肋"],
  [455, 653, 7, G, "阀 门"], [442, 661, 5, G, "(公称不小于1MPa)"], [588, 653, 7, G, "阀 门"], [575, 661, 5, G, "(公称不小于1MPa)"],
  [634, 599, 5, G, "人防以外"], [690, 599, 5, G, "人防以内"], [643, 609, 5, G, "翼环"], [686, 611, 5, G, "套管"], [708, 613, 5, G, "刚性防水套管"],
  [634, 620, 5, G, "管道"], [640, 657, 5, G, "填料"], [686, 657, 5, G, "密闭肋"], [730, 637, 5, G, "室内管网"],
  [726, 655, 7, G, "阀 门"], [712, 663, 5, G, "(公称不小于1MPa"],
  [480, 694, 6, G, "注: 1.在民用建筑,给排水管道穿越人防地下护墙,"], [495, 705, 6, G, "防护密闭门,应采用刚性密闭套管做法处理."],
  [487, 716, 6, G, "2.防水密闭套管安装要求做法图集SS312中"], [494, 725, 6, G, "刚性防水套管"],
  [616, 719, 8, G, "消防,给水管道穿防护墙大样图"],
];
const pipe = (x: number, w: number, y1: number, y2: number) =>
  `M${x} ${y1}V${y2}M${x + w} ${y1}V${y2}M${x} ${y2}q${w / 4} -3 ${w / 2} 0t${w / 2} 0M${x} ${y1}q${w / 4} 3 ${w / 2} 0t${w / 2} 0`;
const joint = (x: number, y: number, w = 12, h = 5) => `M${x} ${y}h${w}v${h}h-${w}z`;

const PipeSection = ({ x, y, both = true }: { x: number; y: number; both?: boolean }) => (
  <g transform={`translate(${x} ${y})`}>
    <S d="M-3 -37H12L14 -40V-34L17 -37H31M-3 36H12L14 33V39L17 36H31M0 -37V-13M27 -37V-13M0 14V36M27 14V36" />
    <S d={both ? "M-50 -5H73M-50 7H73" : "M-17 -5H70M-17 7H70"} />
    <S d={both ? "M-50 -7H73M-50 8H73" : "M-17 -7H70M-17 8H70"} c={Y} w={2} />
    <S d={both ? "M-50 -7q-4 7 0 15q4 -7 0 -15M73 -7q-4 7 0 15q4 -7 0 -15" : "M-17 -7q-3 7 0 15M72 -7q-4 7 0 15q4 -7 0 -15"} />
    <path d="M-4 -11H32V-8H-4ZM-2 10H30V13H-2Z" fill={W} />
    <path d="M1 -10h2v2h-2zM8 -10h1v2h-1zM14 -10h2v1h-2zM21 -10h2v2h-2zM4 11h2v1h-2zM12 11h1v2h-1zM19 11h3v1h-3z" fill="#000" />
    <S d="M-5 -13H33M-5 15H33M-5 -15V-7M-2 -15V-7M33 -15V-7M30 -15V-7M-5 8V17M33 8V17M-2 8V17M30 8V17" c={Y} />
    <S d="M13 -30V-14M15 -29V-19M6 -19H9V-14M9 11V19M14 12V20M28 -18H33M-5 -20H0M-8 -16H0" w={2} />
    <S d={both ? "M-59 0H78" : "M-25 0H73"} c={G} />
    <S d="M-10 -26H-2L13 -19M43 -23H32L15 -10M-19 -15H-10L-3 -8M-14 22H-3L10 11M28 11L32 22H48M88 -20H55" c={G} />
    <S d="M55 -20L34 -8M49 3L59 21" />
    <S d="M59 21H95" c={G} />
    <g stroke="#f00" fill="none">
      <path d="M39 -10V11M60 -10V11" strokeWidth="2" /><path d="M40 -7L59 8M59 -7L40 8" />
      {both && <><path d="M-37 -10V11M-16 -10V11" strokeWidth="2" /><path d="M-36 -7L-17 8M-17 -7L-36 8" /></>}
    </g>
    {both && <><S d="M-26 3L-36 21" /><S d="M-36 21H-70" c={G} /></>}
  </g>
);

const Drawing = () => (
  <svg width="685" height="371" viewBox="65 355 685 371" fill="none" fontFamily='"Noto Sans CJK SC", sans-serif' role="img" aria-label="CAD drawing">
    <defs>
      <pattern id="hy" width="9" height="9" patternUnits="userSpaceOnUse"><path d="M-1 10L10 -1M-1 1L1 -1M8 10L10 8" stroke={Y} /><path d="M-1 6L6 -1" stroke={Y} /><path d="M6 6h1M2 1h1" stroke={Y} /></pattern>
      <pattern id="hw" width="6" height="6" patternUnits="userSpaceOnUse"><path d="M-1 7L7 -1" stroke={W} /></pattern>
      <pattern id="hk" width="4" height="4" patternUnits="userSpaceOnUse"><path d="M-1 5L5 -1" stroke="#000" strokeWidth="2" /></pattern>
      <pattern id="sp" width="20" height="24" patternUnits="userSpaceOnUse"><path d={speckle(330, 20, 24)} fill={W} /></pattern>
    </defs>
    <g shapeRendering="crispEdges">
      {/* wall sleeve */}
      <path d="M164 372H234V402H164ZM164 444H234V475H164Z" fill="url(#hy)" stroke={Y} />
      <path d="M164 402H234V411H164ZM164 434H234V441H164Z" fill={Y} />
      <path d="M185 404H212V410H185ZM185 435H212V441H185Z" fill="url(#hk)" />
      <path d="M169 405h2v2h-2zM175 408h2v1h-2zM181 404h1v2h-1zM219 405h2v1h-2zM226 408h3v1h-3zM171 437h2v1h-2zM180 439h2v1h-2z" fill="#000" />
      <S c={Y} d="M159 372H195L197 367L202 381V372H239M159 475H197L202 481L204 475H239M199 392V402M199 444V452M164 443H234M141 422H265" />
      <S c={Y} w={2} d="M145 411H257M145 434H257" />
      <S c={Y} d="M145 411q-4 6 0 11q4 6 0 12q-6 -6 0 -12q5 -5 0 -11M257 411q-5 5 0 11q-7 6 0 12M257 411q6 6 0 11" />
      <S c={Y} d="M97 406H140L143 421M307 374H251L234 400M313 390H254L245 409M206 431H234M206 431L198 440M272 457H242L234 446M277 474H242L234 461M156 524H279M156 526H279" />
      {/* stack with branches */}
      <path d="M361 370H449V378H361Z" fill="url(#hw)" stroke={W} /><path d="M400 369H409V380H400Z" fill="#000" />
      <S c={Y} d={pipe(400, 10, 356, 516) + pipe(430, 9, 456, 517) + pipe(366, 10, 492, 516)} />
      <S c={Y} d={[404, 430, 439, 465].map((y) => joint(398, y)).join("") + joint(429, 451) + joint(365, 487) + "M398 435h12"} />
      <S c={Y} d="M410 427L430 448V451M419 421L439 443V451M417 422l5 5l-8 7l-5 -5zM434 435l5 5l-9 7l-5 -5zM399 461L380 482L376 485M389 457L367 479V487M390 457l8 8l-4 4l-8 -8zM377 471l8 8l-4 4l-8 -8z" />
      <S d="M368 363H383L386 369M475 417H419L409 412M466 431H427L419 424M493 447H438M486 475H438M361 438H398M399 447L388 458M343 468H378L381 464M317 482H366M321 506H368" />
      {/* paired stacks */}
      <path d="M563 396H701V405H563Z" fill="url(#hw)" stroke={W} />
      <path d="M579 395H588V407H579ZM611 395H620V407H611ZM649 395H658V407H649ZM682 395H691V407H682ZM631 394H638V407H631Z" fill="#000" />
      <S c={Y} d={[578, 610, 648, 681].map((x) => pipe(x, 10, 357, 500)).join("")} />
      <S c={Y} d={[[577, 443], [577, 470], [609, 422], [609, 449], [647, 423], [647, 449], [680, 445], [680, 472]].map(([x, y]) => joint(x, y)).join("")} />
      <S c={Y} d="M588 453L599 441L610 453M590 452L598 459L610 445M603 438l8 8M596 444l8 8M593 448l8 8M658 444L666 455L671 460L681 453M667 440L681 454M672 441l-10 10M676 445l-10 10M680 449l-9 9M631 391V410M638 391V410M625 402L634 398L630 403L643 399" />
      <S d="M541 429H598L607 439M542 438H587L595 447M610 430L599 441M598 457L588 468M520 464H581M533 488H581M727 427H672L667 440M727 436H681L673 447M658 430L667 440M671 458L682 468M690 463H748M690 486H736" />
      <S c={G} d="M520 557H725M520 559H725" />
      {/* coordinate icon */}
      <S d="M84 634L88 639L93 634M88 639V643M88 652L84 663H93ZM88 654V698M84 698H92V707H84ZM92 702H127M127 698L138 702L127 707Z" />
      <path d="M86 662L88 655L91 662ZM128 700L136 702L128 705Z" fill="#aaa" />
      {/* floor penetration */}
      <path d="M139 694H155V720H139ZM188 694H206V720H188Z" fill="url(#sp)" />
      <path d="M155 694H163V720H155ZM180 694H188V720H180Z" fill={W} />
      <path d="M139 689H159V685H163V694H139ZM180 685H184V689H206V694H180ZM152 721H163V726H152ZM180 721H191V726H180Z" fill="#ffff80" />
      <S c="#ffff80" d="M138 685V726M206 685V726M134 706H141M202 706H209" />
      <S d={"M163 629V726M179 629V726M171 622V726M163 629q4 -6 8 0t8 0" + joint(162, 639, 18, 3) + joint(162, 657, 18, 4) + joint(162, 676, 18, 3) + "M181 663H205V671H181M185 661V673H189V661ZM181 667H211M203 663V671"} />
      <S d="M186 616L179 630M186 638L179 653M200 651L190 665M156 670L160 684M149 681L156 693M192 682L188 688M203 699H188" />
      <S c={G} d="M186 616H222M186 638H214M200 651H241M102 671H156M130 681H149M192 682H209M203 699H243" />
      {/* riser pair through slab */}
      <path d="M305 614H326V640H305ZM352 614H360V640H352ZM387 614H408V640H387Z" fill="url(#sp)" />
      <path d="M320 609Q323 600 330 600V654H326V645H319V640H325V614H305V609ZM347 600Q355 603 356 609Q357 603 365 600V654H361V645H351V654H347ZM382 600Q390 602 391 609H408V614H387V640H394V645H386V654H382Z" fill={W} />
      <path d="M352 616H360V640H352Z" fill="#000" /><path d="M352 616H360V640H352Z" fill="url(#sp)" />
      <S d={pipe(330, 17, 576, 682) + pipe(365, 17, 576, 682) + "M338 570V684M373 570V684M305 640H408M305 605V645M408 605V645M420 613V641M410 613H423M410 640H423M305 609H325M388 609H408"} />
      <S d="M308 565H330L337 574M397 566H375L367 574M296 586H318L326 600M318 592L322 606M417 589H394L388 603M409 602H397L393 612M423 607H412L408 615M311 657H324L328 650M401 657H389L385 650M300 596V606M296 606H305M294 620L302 630V615M297 612V635" />
      <path d="M296 596h5v8h-5zM295 622h5v9h-5zM414 624h5v5h-5z" fill={W} />
      <PipeSection x={515} y={633} />
      <PipeSection x={654} y={635} both={false} />
      <path d="M616 724H750V727H616Z" fill={G} />
      <S d="M746 624V684M716 654H750M743 651H749V657H743Z" />
      <S c="#f0f" d="M726 654H730M734 654H738M746 658V664" />
    </g>
    {labels.map(([x, y, s, c, t], i) => <T key={i} x={x} y={y} s={s} c={c}>{t}</T>)}
    <text x="255" y="401" fontSize="10" fontWeight="bold" fontFamily='"Liberation Serif", serif' fill={Y}>RK-1</text>
    <T x={280} y={400} s={7} c={Y}>柔性抗震</T>
    <T x={67} y={373} s={15} c="#6464b4">调试版本</T>
  </svg>
);

/* ---------- app ---------- */

const menus = [["文件", "F"], ["编辑", "E"], ["视图", "V"], ["格式", "O"], ["绘图", "D"], ["修改", "M"]];
const tabs: [string, React.ReactNode][] = [["梦想CAD", <MLogo key="m" />], ["梦想MxDraw", <DocIcon key="d" />], ["MxDraw", <DocIcon key="e" />]];
const toggles: [string, boolean][] = [["栅格", false], ["正交", false], ["极轴", false], ["对象捕捉", true], ["对象追踪", true], ["DYN", false], ["线宽", false]];

export default function App() {
  return (
    <Page>
      <GlobalStyle />
      <TitleBar>
        <BrandBadge><Brand /></BrandBadge>
        {tabs.map(([t, icon], i) => (
          <TabShape key={t} $active={i === 2}>
            {icon}
            <TabTitle>{t}</TabTitle>
            <BareButton aria-label="关闭标签"><CloseIcon /></BareButton>
          </TabShape>
        ))}
        <NewTab aria-label="新建标签" />
        <WindowButtons>
          <BareButton aria-label="标签数"><Svg w={27} h={22}><rect x="1" y="1" width="25" height="19" rx="2" stroke="#fff" strokeWidth="1.6" /><text x="9" y="16" fill="#fff" fontFamily="Noto Sans" fontSize="15">3</text></Svg></BareButton>
          <BareButton aria-label="菜单"><Svg w={16} h={15}><L d="M0 1H16M0 7.500H16M0 14H16" c="#fff" w={2} /></Svg></BareButton>
          <BareButton aria-label="皮肤"><Svg w={21} h={18}><L d="M1 1H6Q10 6 15 1H20V8H17V17H4V8H1Z" c="#fff" w={1.8} /></Svg></BareButton>
          <BareButton aria-label="最小化"><Svg w={15} h={2}><L d="M0 1H15" c="#fff" w={2} /></Svg></BareButton>
          <BareButton aria-label="最大化"><Svg w={14} h={14}><rect x="1" y="1" width="12" height="12" stroke="#fff" strokeWidth="2" /></Svg></BareButton>
          <BareButton aria-label="关闭"><CloseIcon c="#fff" w={2} /></BareButton>
        </WindowButtons>
      </TitleBar>

      <AddressRow>
        <NavGroup>
          <BareButton aria-label="后退"><Svg s={26}><L d="M24 13H5M14 3L4 13L14 23" c="#afd5ff" w={3} /></Svg></BareButton>
          <BareButton aria-label="刷新"><Svg s={28}><path d="M20 7A9.500 9.500 0 1 0 21.500 19" stroke="#00b81c" strokeWidth="3" /><F d="M25 5V13H16Z" c="#00b81c" /></Svg></BareButton>
          <NavSplit>
            <BareButton aria-label="恢复"><Svg w={28} h={24}><L d="M7 5H17Q25 5 25 13Q25 21 17 21H9" c="#9b3dff" w={3} /><F d="M3 5L9 0V10Z" c="#9b3dff" /></Svg></BareButton>
            <Caret c="#9b3dff" w={8} />
          </NavSplit>
          <BareButton aria-label="主页"><Svg w={24} h={26}><L d="M3 11L12 3L21 11V24H3Z" c="#ffab1c" w={2.8} /><F d="M9 17H15V24H9Z" c="#ffab1c" /></Svg></BareButton>
        </NavGroup>
        <Rule />
        <Svg w={22} h={25}><L d="M1.500 1.500H20.500V17Q17 21 11 23Q5 21 1.500 17Z" c="#70ca80" f="#dff7e2" w={2.500} /><L d="M6 9L10 13L17 7" c="#70ca80" w={2.500} /></Svg>
        <Url aria-label="地址" defaultValue="file:///E:/MxDrawWork/MxDrawCode/SRC/MxDraw" />
        <AddressActions>
          <Svg w={18} h={24}><F d="M10 1L1 14H8L6 23L17 9H10Z" c="#a5a5a5" /></Svg>
          <Svg s={23}><L d="M11.500 2L14.500 9L21 9.500L16 14L17.500 21L11.500 17L5.500 21L7 14L2 9.500L8.500 9Z" c="#a5a5a5" w={2.600} /></Svg>
          <Caret w={13} />
        </AddressActions>
      </AddressRow>

      <Bookmarks>
        <Bookmark href="#fav"><Svg s={23}><path d="M11.500 1L14.500 8L22 9L17 14L18 21L11.500 18L5 21L6 14L1 9L8.500 8Z" fill="#f9d648" stroke="#eeaf43" strokeWidth="1.500" /></Svg>收藏<BookmarkCaret><Caret c="#bbb" /></BookmarkCaret></Bookmark>
        <Bookmark href="#nav"><Svg s={23}><circle cx="12" cy="11" r="9" stroke="#777" strokeWidth="2" /><ellipse cx="12" cy="11" rx="4.500" ry="9" stroke="#777" strokeWidth="1.800" /><L d="M12 2V20M3 11H21" c="#777" w={1.800} /></Svg>网址导航</Bookmark>
        <Bookmark href="#game"><Svg s={23}><circle cx="12" cy="11" r="10.500" fill="#b90710" /><circle cx="11" cy="8" r="7" fill="#eb2c26" /><L d="M18 6H8Q3 9 8 11H15Q20 14 14 16H5" c="#fff" w={2.500} /></Svg>游戏中心</Bookmark>
        <Bookmark href="#novel"><Svg s={23}><rect width="23" height="23" rx="4" fill="#ff6758" /><F d="M8 3L16 2L14 8H18L9 16L10 11H5Z" c="#fff" /><F d="M8 15L18 11L11 20L5 18Z" c="#ffb6ad" /></Svg>小说大全</Bookmark>
        <Bookmark href="#tao"><Badge $bg="#e92c36" $size={18}>淘</Badge>爱淘宝</Bookmark>
        <Bookmark href="#jd"><Badge $bg="#c81325" $size={15}>JD</Badge>京东商城</Bookmark>
        <Bookmark href="#ju"><Badge $bg="#f52c58" $size={18}>聚</Badge>聚划算</Bookmark>
      </Bookmarks>

      <Content>
        <ActionRow>
          <PushButton>打开网络文件</PushButton>
          <PushButton>保存文件到服务器</PushButton>
        </ActionRow>

        <Cad>
          <MenuBar>
            <Grip />
            {menus.map(([t, k]) => <MenuItem key={k}>{t}(<u>{k}</u>)</MenuItem>)}
          </MenuBar>
          <ToolBar><Grip /><Tools list="new open folder web save saveas saveall | zoomrt zoomwin zoomall pan axis zoomobj layon layoff | prev dyn orbit pencil palette props lines block | calc select | undo redo | print globeup globedown | pdf image" /></ToolBar>
          <ToolBar $inset={4}><Grip /><Tools list="ruler area cloud note stamp pen | find" /></ToolBar>
          <ToolBar>
            <Grip /><ToolButton name="layers" />
            <Combo $w={250}>
              <Svg w={14} h={12}><F d="M0 5Q6 0 13 4V10Q6 12 2 8Z" c="#a7b7c6" /><circle cx="8" cy="6" r="3" fill="#21384f" /><L d="M0 3Q7 -1 13 4" c="#52697e" /></Svg>
              <Svg w={16} h={16}><F d="M5 8H16V16H5Z" c="#c99a2b" /><L d="M5 11H16M5 13.500H16" c="#7c5815" w={1} /><L d="M2 7V3Q5 -1 8 3V8" c="#b78d23" w={2} /></Svg>
              <Svg w={14} h={14}><L d="M7 0V14M0 7H14M2 2L12 12M12 2L2 12" c="#ffd21f" /><circle cx="7" cy="7" r="4.500" fill="#ffa000" /></Svg>
              <Swatch />
              <ComboSelect aria-label="图层" $indent={14}><option>0</option></ComboSelect>
              <Chevron />
            </Combo>
            <Grip />
            <Combo $w={120}>
              <Swatch />
              <ComboSelect aria-label="颜色" $indent={13}><option>ByL...</option></ComboSelect>
              <Chevron />
            </Combo>
            <Grip />
            <Combo $w={180}>
              <Svg w={62} h={2}><L d="M0 .5H62" c="#000" w={1} /></Svg>
              <ComboSelect aria-label="线型" $indent={10}><option>ByLayer</option></ComboSelect>
              <Chevron />
            </Combo>
            <Tool aria-label="线型设置"><Svg><F d="M6 12L12 4L15 6L9 14L5 15Z" c="#ffc61f" /><F d="M12 4L14 1L17 3L15 6Z" c="#e94c35" /><L d="M1 16H17" c={B} w={1} /></Svg></Tool>
          </ToolBar>

          <Workspace>
            <SideDock>
              <FlatGrip />
              <SideColumn><Tools list="hatch" /></SideColumn>
              <SideColumn><Tools list="line xline pline polygon polyshape rect arc circle spline ellipse elarc point insert make text picture mtext" /></SideColumn>
            </SideDock>
            <Viewport>
              <Screen><Drawing /></Screen>
              <ModelStrip>
                <Pager aria-label="上一个"><Svg w={8} h={12}><F d="M8 0V12L0 6Z" c="#555" /></Svg></Pager>
                <Pager aria-label="下一个"><Svg w={8} h={12}><F d="M0 0V12L8 6Z" c="#555" /></Svg></Pager>
                <ModelTab>
                  <Svg w={75} h={25}><path d="M1 0L13 24H62L74 0" fill="#fff" /><path d="M1 0L13 24M62 24L74 0" stroke="#222" /></Svg>
                  <span>模型</span>
                </ModelTab>
              </ModelStrip>
            </Viewport>
            <SideDockRight>
              <FlatGrip />
              <SideColumn><Tools list="dimlin dimali dimrad dimdia dimang - dimcon - order1 order2 order3 order4" /></SideColumn>
              <SideColumn $rule><Tools list="erase copy move rotate scale offset array mirror sketch chamfer fillet trim extend box gap join" /></SideColumn>
            </SideDockRight>
          </Workspace>

          <CommandPane>
            <CommandLine>
              命令：<CommandInput aria-label="命令" />
              <Spin><Svg w={10} h={18}><L d="M1 6L5 2L9 6M1 12L5 16L9 12" c="#555" w={1.800} /></Svg></Spin>
            </CommandLine>
            <HistoryRow>
              <span>命令：</span>
              <Scroller>
                <ScrollArrow aria-label="向左"><Svg w={9} h={12}><L d="M8 1L2 6L8 11" c="#555" w={2} /></Svg></ScrollArrow>
                <Thumb />
                <ScrollArrow $push aria-label="向右"><Svg w={9} h={12}><L d="M1 1L7 6L1 11" c="#555" w={2} /></Svg></ScrollArrow>
              </Scroller>
            </HistoryRow>
          </CommandPane>

          <StatusRow>
            <Coordinates>{"1674244.326735,  -124100.70"}</Coordinates>
            {toggles.map(([t, on]) => <StatusToggle key={t} $on={on}>{t}</StatusToggle>)}
            <Vendor><MLogo s={16} /><span><b>MxDraw</b>Software</span></Vendor>
          </StatusRow>
        </Cad>
      </Content>

      <Footer>
        <Svg w={20} h={20}><L d="M1 1V19M7 2L18 10L7 18Z" c={GREY} w={2} /></Svg>
        <FooterState>完成</FooterState>
        <FooterTools>
          <FooterNews>
            <FooterTool><Svg w={24} h={24}><L d="M8 22Q1 18 2 11Q4 8 6 10Q10 7 10 2Q14 3 15 9L18 7Q23 12 21 17Q20 21 16 22" c={GREY} w={1.500} /></Svg>热点推荐</FooterTool>
            <FooterTool $gap={8}><Svg w={24} h={24}><rect width="24" height="24" rx="2" fill="#ff3333" /><L d="M6 9V18M12 5V18M18 12V18" c="#fff" w={2.500} /></Svg>实时热榜</FooterTool>
          </FooterNews>
          <FooterTool aria-label="安全"><Svg w={22} h={23}><L d="M2 3Q7 4 11 1Q15 4 20 3V12Q19 18 11 22Q3 18 2 12Z" c={GREY} /><L d="M7 11L10 14L16 8" c={GREY} w={2} /></Svg></FooterTool>
          <FooterTool aria-label="声音"><Svg w={22} h={18}><L d="M2 6H6L11 1V17L6 12H2Z" c={GREY} w={1.800} /><L d="M14 5Q17 9 14 13M17 2Q23 9 17 16" c={GREY} w={1.800} /></Svg></FooterTool>
          <FooterTool aria-label="工具箱"><Svg w={22} h={20}><L d="M3 8H19V18H3ZM7 8V2H15V8M7 13H15M11 10V16" c={GREY} w={1.800} /></Svg></FooterTool>
          <FooterTool><Svg w={20} h={22}><L d="M2 3Q6 3 10 1Q14 3 18 3V12Q17 18 10 21Q3 18 2 12Z" c={GREY} /><text x="4" y="14" fontFamily="Liberation Sans" fontWeight="bold" fontSize="8" fill={GREY}>AD</text></Svg><FooterFigure>0</FooterFigure></FooterTool>
          <FooterTool><Svg s={20}><circle cx="9" cy="9" r="7.500" stroke={GREY} strokeWidth="1.800" /><L d="M15 15L19 19M5 9H13M9 5V13" c={GREY} w={1.800} /></Svg><FooterFigure>100%</FooterFigure></FooterTool>
        </FooterTools>
      </Footer>
    </Page>
  );
}
